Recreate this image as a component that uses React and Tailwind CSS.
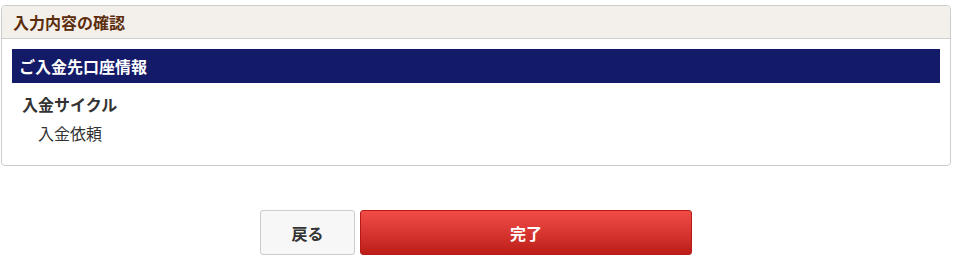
export default function App() {
  const jp = { fontFamily: '"Noto Sans CJK JP", "Noto Sans", sans-serif' };
  return (
    <div className="w-[957px] h-[265px] bg-white overflow-hidden" style={jp}>
      <div className="pt-[5px] pl-[1px]">
        <div className="w-[950px] border border-[#cccccc] rounded-[4px] overflow-hidden">
          <div className="h-[33px] bg-[#f3efeb] border-b border-[#cfcfcf] flex items-center pl-[11px]">
            <span className="text-[16px] font-bold text-[#5c2d0c] leading-none">入力内容の確認</span>
          </div>
          <div className="px-[10px] pt-[10px] pb-[20px]">
            <div className="h-[34px] bg-[#131a68] flex items-center pl-[7px]">
              <span className="text-[16px] font-bold text-white leading-none">ご入金先口座情報</span>
            </div>
            <div className="mt-[9px] pl-[10px] h-[24px] flex items-center text-[16px] font-bold text-[#333333]">
              入金サイクル
            </div>
            <div className="mt-[5px] pl-[26px] h-[24px] flex items-center text-[16px] text-[#333333]">
              入金依頼
            </div>
          </div>
        </div>
      </div>
      <div className="mt-[44px] flex pl-[260px] gap-[5px]">
        <button className="w-[95px] h-[45px] bg-[#f7f7f7] border border-[#cccccc] rounded-[3px] text-[16px] font-bold text-[#333333] flex items-center justify-center">
          戻る
        </button>
        <button className="w-[332px] h-[45px] rounded-[3px] border border-[#b51a16] bg-gradient-to-b from-[#f24c47] to-[#bd1c17] text-[16px] font-bold text-white flex items-center justify-center">
          完了
        </button>
      </div>
    </div>
  );
}
